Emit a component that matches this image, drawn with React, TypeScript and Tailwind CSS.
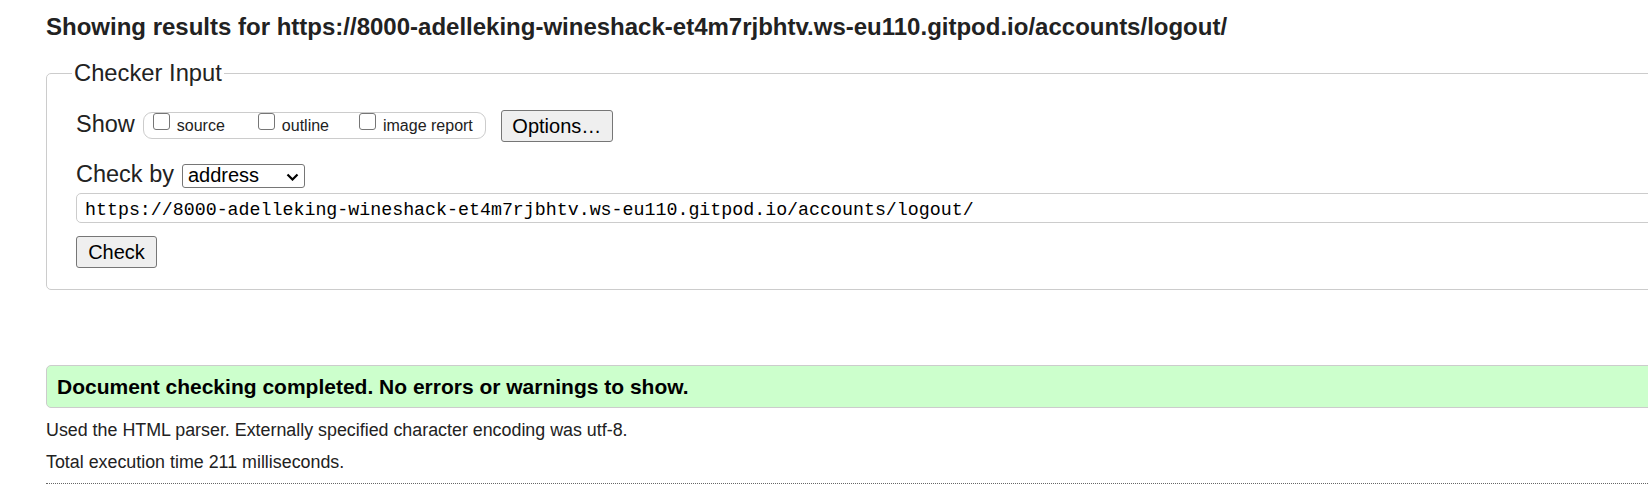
import React from "react";

const URL = "https://8000-adelleking-wineshack-et4m7rjbhtv.ws-eu110.gitpod.io/accounts/logout/";

function Box({ label }: { label: string }) {
  return (
    <div className="flex items-start">
      <div className="w-[17px] h-[17px] rounded-[3px] border border-[#767676] bg-white shrink-0" />
      <span className="ml-[7px] mt-[4px] text-[16px] leading-[18px] whitespace-nowrap">{label}</span>
    </div>
  );
}

export default function App() {
  return (
    <div className="w-[1648px] h-[496px] overflow-hidden bg-white text-[#222] font-['Liberation_Sans',Arial,sans-serif]">
      <div className="pl-[46px]">
        <h2 className="mt-[13px] text-[24px] leading-[28px] font-bold whitespace-nowrap">
          Showing results for {URL}
        </h2>
        <fieldset className="mt-[18px] w-[1760px] border border-[#ccc] rounded-[5px] pl-[25px] pt-[23px] pb-[21px]">
          <legend className="px-[2px] text-[23.76px] leading-[28px]">Checker Input</legend>
          <div className="pl-[4px]">
            <div className="flex items-start h-[32px]">
              <span className="text-[23.5px] leading-[28px]">Show</span>
              <div className="ml-[8px] mt-[2px] w-[343px] h-[27px] flex items-start border border-[#ccc] rounded-[9px] pl-[9px]">
                <Box label="source" />
                <div className="ml-[33px]">
                  <Box label="outline" />
                </div>
                <div className="ml-[30px]">
                  <Box label="image report" />
                </div>
              </div>
              <button className="ml-[15px] w-[112px] h-[32px] bg-[#efefef] border border-[#767676] rounded-[3px] text-[20px] leading-[23px] text-black">
                Options…
              </button>
            </div>
            <div className="mt-[18px] flex items-start">
              <span className="text-[23.5px] leading-[28px]">Check by</span>
              <div className="relative ml-[8px] mt-[4px] w-[123px] h-[24px]">
                <select
                  className="appearance-none block w-full h-full border border-[#767676] rounded-[3px] bg-white pl-[5px] pb-[2px] text-[20px] leading-[20px] text-black"
                  defaultValue="address"
                >
                  <option value="address">address</option>
                </select>
                <svg
                  className="absolute right-[6px] top-[9px] w-[13px] h-[8px] pointer-events-none"
                  viewBox="0 0 13 8"
                >
                  <polyline points="1.5,1.5 6.5,6.5 11.5,1.5" fill="none" stroke="#000" strokeWidth="2.2" />
                </svg>
              </div>
            </div>
            <input
              readOnly
              value={URL}
              className="mt-[5px] block w-[1680px] h-[30px] border border-[#ccc] rounded-[5px] pl-[8px] pt-[4px] text-[18.3px] text-black font-['Liberation_Mono',monospace] outline-none"
            />
            <button className="mt-[13px] block w-[81px] h-[32px] bg-[#efefef] border border-[#767676] rounded-[3px] text-[20px] leading-[23px] text-black">
              Check
            </button>
          </div>
        </fieldset>
        <div className="mt-[75px] w-[1700px] h-[43px] border border-[#ccc] rounded-[5px] bg-[#ccffcc] pl-[10px] text-[21px] leading-[41px] font-bold text-black whitespace-nowrap">
          Document checking completed. No errors or warnings to show.
        </div>
        <p className="mt-[6px] text-[17.85px] leading-[32px]">
          Used the HTML parser. Externally specified character encoding was utf-8.
        </p>
        <p className="text-[17.85px] leading-[32px]">Total execution time 211 milliseconds.</p>
        <div className="mt-[5px] w-[1700px] border-t border-dotted border-[#666]" />
      </div>
    </div>
  );
}
